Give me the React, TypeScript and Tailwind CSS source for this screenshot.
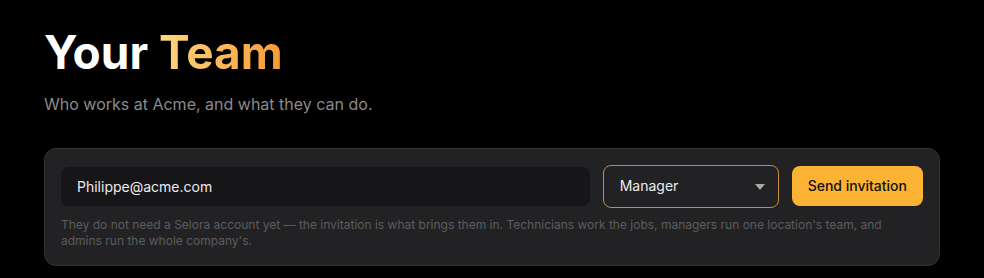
import { useState } from 'react'

const roles = ['Technician', 'Manager', 'Admin']

export default function App() {
  const [email, setEmail] = useState('Philippe@acme.com')
  const [role, setRole] = useState('Manager')

  return (
    <div className="min-h-screen bg-black px-11 pt-[27px] font-['Inter','Liberation_Sans',sans-serif]">
      <h1 className="text-[46px] leading-[1.1] font-bold text-white">
        Your{' '}
        <span className="bg-gradient-to-r from-[#fdd77c] to-[#f69a32] bg-clip-text text-transparent">Team</span>
      </h1>
      <p className="mt-[14px] text-base text-[#8a8a8a]">Who works at Acme, and what they can do.</p>

      <div className="mt-8 w-[896px] rounded-xl border border-[#333335] bg-[#222224] p-4">
        <div className="flex items-center gap-[13px]">
          <input
            value={email}
            onChange={(e) => setEmail(e.target.value)}
            className="h-[39px] flex-1 rounded-lg bg-[#161618] px-4 text-sm text-[#ececec] focus:outline-none"
          />
          <div className="relative w-[176px]">
            <select
              value={role}
              onChange={(e) => setRole(e.target.value)}
              className="h-[43px] w-full appearance-none rounded-lg border border-[#c98a3f] bg-[#222224] px-4 text-sm text-[#ececec] focus:outline-none"
            >
              {roles.map((r) => <option key={r} value={r}>{r}</option>)}
            </select>
            <svg width="10" height="6" viewBox="0 0 10 6" className="pointer-events-none absolute right-[14px] top-[19px]">
              <path d="M0 0h10L5 6z" fill="#a8a8a8" />
            </svg>
          </div>
          <button className="h-10 rounded-lg bg-[#fcb232] px-4 text-sm font-medium text-[#111]">
            Send invitation
          </button>
        </div>
        <p className="mt-[9px] text-xs leading-4 text-[#5c5c5e]">
          They do not need a Selora account yet — the invitation is what brings them in. Technicians work the jobs, managers run one location's team, and admins run the whole company's.
        </p>
      </div>
    </div>
  )
}
